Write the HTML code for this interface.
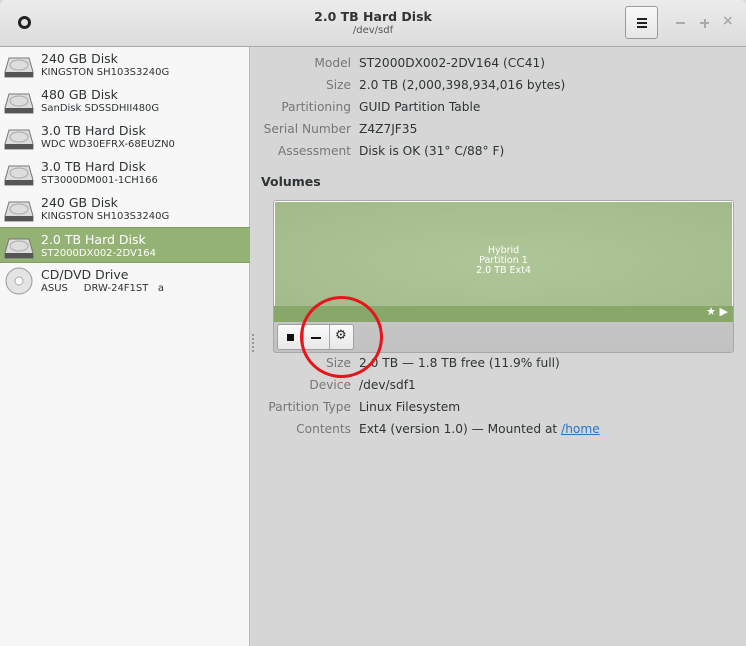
<!DOCTYPE html>
<html><head><style>
*{margin:0;padding:0;box-sizing:border-box}
body{width:746px;height:646px;overflow:hidden;font-family:"DejaVu Sans","Liberation Sans",sans-serif;background:#d6d6d6;position:relative;font-size:12.2px;color:#2e3436}
.hdr{position:absolute;left:0;top:0;width:746px;height:47px;background:linear-gradient(#ececec,#dcdcdc);border-bottom:1px solid #a8a8a8;border-radius:5px 5px 0 0}
.side{position:absolute;left:0;top:47px;width:250px;height:599px;background:#f7f7f7;border-right:1px solid #b8b8b8}
.row{position:absolute;left:0;width:250px;height:36px}
.row .t{position:absolute;left:41px;top:4px;font-size:12.5px;color:#2e3436}
.row .s{position:absolute;left:41px;top:20px;font-size:10px;color:#2e3436}
.row.sel{background:#94b274;border-top:1px solid #7f9e62;border-bottom:1px solid #7f9e62}
.row.sel .t,.row.sel .s{color:#fff}
.hd{position:absolute;left:4px;top:9px;width:30px;height:22px}
.lbl{position:absolute;right:395px;color:#777;font-size:12.2px;text-align:right}
.val{position:absolute;left:359px;color:#2e3436;font-size:12.2px}
</style></head><body>
<div class="hdr">
 <div style="position:absolute;left:18px;top:16px;width:13px;height:13px;border-radius:50%;border:3px solid #222"></div>
 <div style="position:absolute;left:0;width:746px;top:9px;text-align:center;font-weight:bold;font-size:12.5px;color:#333">2.0 TB Hard Disk</div>
 <div style="position:absolute;left:0;width:746px;top:25px;text-align:center;font-size:10px;color:#555">/dev/sdf</div>
 <div style="position:absolute;left:625px;top:6px;width:33px;height:33px;border:1px solid #9a9a9a;border-radius:3px;background:linear-gradient(#f8f8f8,#e6e6e6)">
  <div style="position:absolute;left:11px;top:11px;width:10px;height:2px;background:#222;box-shadow:0 4px #222,0 8px #222"></div></div>
 <div style="position:absolute;left:676px;top:22px;width:9px;height:2px;background:#aaa"></div>
 <div style="position:absolute;left:700px;top:22px;width:9px;height:2px;background:#aaa"></div>
 <div style="position:absolute;left:703.5px;top:18.5px;width:2px;height:9px;background:#aaa"></div>
 <div style="position:absolute;left:722px;top:13px;font-size:14px;color:#aaa;font-weight:bold">×</div>
</div>
<div class="side">
 <div class="row" style="top:0"><svg class="hd" viewBox="0 0 30 22"><path d="M5 2h20l4 14v5H1v-5z" fill="#ddd" stroke="#777"/><ellipse cx="15" cy="9" rx="9" ry="5" fill="none" stroke="#aaa"/><rect x="1" y="16" width="28" height="5" fill="#555"/></svg><div class="t">240 GB Disk</div><div class="s">KINGSTON SH103S3240G</div></div>
 <div class="row" style="top:36px"><svg class="hd" viewBox="0 0 30 22"><path d="M5 2h20l4 14v5H1v-5z" fill="#ddd" stroke="#777"/><ellipse cx="15" cy="9" rx="9" ry="5" fill="none" stroke="#aaa"/><rect x="1" y="16" width="28" height="5" fill="#555"/></svg><div class="t">480 GB Disk</div><div class="s">SanDisk SDSSDHII480G</div></div>
 <div class="row" style="top:72px"><svg class="hd" viewBox="0 0 30 22"><path d="M5 2h20l4 14v5H1v-5z" fill="#ddd" stroke="#777"/><ellipse cx="15" cy="9" rx="9" ry="5" fill="none" stroke="#aaa"/><rect x="1" y="16" width="28" height="5" fill="#555"/></svg><div class="t">3.0 TB Hard Disk</div><div class="s">WDC WD30EFRX-68EUZN0</div></div>
 <div class="row" style="top:108px"><svg class="hd" viewBox="0 0 30 22"><path d="M5 2h20l4 14v5H1v-5z" fill="#ddd" stroke="#777"/><ellipse cx="15" cy="9" rx="9" ry="5" fill="none" stroke="#aaa"/><rect x="1" y="16" width="28" height="5" fill="#555"/></svg><div class="t">3.0 TB Hard Disk</div><div class="s">ST3000DM001-1CH166</div></div>
 <div class="row" style="top:144px"><svg class="hd" viewBox="0 0 30 22"><path d="M5 2h20l4 14v5H1v-5z" fill="#ddd" stroke="#777"/><ellipse cx="15" cy="9" rx="9" ry="5" fill="none" stroke="#aaa"/><rect x="1" y="16" width="28" height="5" fill="#555"/></svg><div class="t">240 GB Disk</div><div class="s">KINGSTON SH103S3240G</div></div>
 <div class="row sel" style="top:180px"><svg class="hd" viewBox="0 0 30 22"><path d="M5 2h20l4 14v5H1v-5z" fill="#ddd" stroke="#777"/><ellipse cx="15" cy="9" rx="9" ry="5" fill="none" stroke="#aaa"/><rect x="1" y="16" width="28" height="5" fill="#555"/></svg><div class="t">2.0 TB Hard Disk</div><div class="s">ST2000DX002-2DV164</div></div>
 <div class="row" style="top:216px"><svg class="hd" viewBox="0 0 30 30" style="top:3px;height:30px"><circle cx="15" cy="15" r="13" fill="#e4e4e4" stroke="#999"/><circle cx="15" cy="15" r="4" fill="#fff" stroke="#aaa"/></svg><div class="t">CD/DVD Drive</div><div class="s">ASUS&nbsp;&nbsp;&nbsp;&nbsp;&nbsp;DRW-24F1ST&nbsp;&nbsp;&nbsp;a</div></div>
</div>
<div style="position:absolute;left:252px;top:334px;width:2px;height:20px;background:repeating-linear-gradient(#999 0 2px,transparent 2px 4px)"></div>
<div class="lbl" style="top:56px">Model</div><div class="val" style="top:56px">ST2000DX002-2DV164 (CC41)</div>
<div class="lbl" style="top:78px">Size</div><div class="val" style="top:78px">2.0 TB (2,000,398,934,016 bytes)</div>
<div class="lbl" style="top:100px">Partitioning</div><div class="val" style="top:100px">GUID Partition Table</div>
<div class="lbl" style="top:122px">Serial Number</div><div class="val" style="top:122px">Z4Z7JF35</div>
<div class="lbl" style="top:144px">Assessment</div><div class="val" style="top:144px">Disk is OK (31° C/88° F)</div>
<div style="position:absolute;left:261px;top:174px;font-weight:bold;font-size:12.5px">Volumes</div>
<div style="position:absolute;left:273px;top:200px;width:461px;height:153px;border:1px solid #a8a8a8;border-radius:3px;background:linear-gradient(#d2d2d2,#c2c2c2);overflow:hidden">
 <div style="position:absolute;left:0;top:0;width:459px;height:121px;background:radial-gradient(ellipse at center,#afc698,#a2ba8a);border:1px solid #fff"></div>
 <div style="position:absolute;left:0;top:105px;width:459px;height:16px;background:#88a76a"></div>
 <div style="position:absolute;left:0;top:45px;width:459px;text-align:center;color:#fff;font-size:9.5px;line-height:10px">Hybrid<br>Partition 1<br>2.0 TB Ext4</div>
 <div style="position:absolute;right:5px;top:104px;color:#fff;font-size:11px">★ ▶</div>
 <div style="position:absolute;left:3px;top:123px;width:77px;height:26px;border:1px solid #a0a0a0;border-radius:3px;background:linear-gradient(#fafafa,#e8e8e8)">
  <div style="position:absolute;left:25px;top:0;width:1px;height:24px;background:#aaa"></div>
  <div style="position:absolute;left:51px;top:0;width:1px;height:24px;background:#aaa"></div>
  <div style="position:absolute;left:9px;top:9px;width:7px;height:7px;background:#111"></div>
  <div style="position:absolute;left:33px;top:12px;width:10px;height:2px;background:#111"></div>
  <div style="position:absolute;left:57px;top:3px;font-size:13px;color:#222">⚙</div>
 </div>
</div>
<div class="lbl" style="top:356px">Size</div><div class="val" style="top:356px">2.0 TB — 1.8 TB free (11.9% full)</div>
<div class="lbl" style="top:378px">Device</div><div class="val" style="top:378px">/dev/sdf1</div>
<div class="lbl" style="top:400px">Partition Type</div><div class="val" style="top:400px">Linux Filesystem</div>
<div class="lbl" style="top:422px">Contents</div><div class="val" style="top:422px">Ext4 (version 1.0) — Mounted at <span style="color:#2a76c6;text-decoration:underline">/home</span></div>
<div style="position:absolute;left:300px;top:296px;width:83px;height:82px;border:3px solid #e8141c;border-radius:50%"></div>
</body></html>
